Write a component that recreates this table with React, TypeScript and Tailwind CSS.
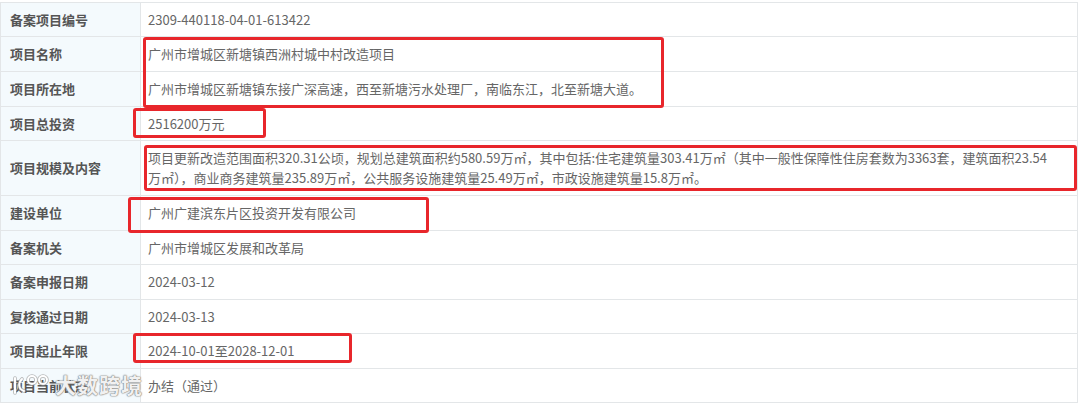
import React from 'react';

interface Row {
  label: string;
  value: React.ReactNode;
  h: string;
}

const rows: Row[] = [
  { label: '备案项目编号', value: '2309-440118-04-01-613422', h: 'h-[34px]' },
  { label: '项目名称', value: '广州市增城区新塘镇西洲村城中村改造项目', h: 'h-[35px]' },
  { label: '项目所在地', value: '广州市增城区新塘镇东接广深高速，西至新塘污水处理厂，南临东江，北至新塘大道。', h: 'h-[35px]' },
  { label: '项目总投资', value: '2516200万元', h: 'h-[34px]' },
  {
    label: '项目规模及内容',
    value: (
      <>
        项目更新改造范围面积320.31公顷，规划总建筑面积约580.59万㎡，其中包括:住宅建筑量303.41万㎡（其中一般性保障性住房套数为3363套，建筑面积23.54
        <br />
        万㎡），商业商务建筑量235.89万㎡，公共服务设施建筑量25.49万㎡，市政设施建筑量15.8万㎡。
      </>
    ),
    h: 'h-[55px]',
  },
  { label: '建设单位', value: '广州广建滨东片区投资开发有限公司', h: 'h-[35px]' },
  { label: '备案机关', value: '广州市增城区发展和改革局', h: 'h-[34px]' },
  { label: '备案申报日期', value: '2024-03-12', h: 'h-[35px]' },
  { label: '复核通过日期', value: '2024-03-13', h: 'h-[34px]' },
  { label: '项目起止年限', value: '2024-10-01至2028-12-01', h: 'h-[35px]' },
  { label: '项目当前状态', value: '办结（通过）', h: 'h-[34px]' },
];

const Highlight: React.FC<{ className: string }> = ({ className }) => (
  <div className={`absolute border-[3px] border-[#e8262b] rounded-[3px] pointer-events-none ${className}`} />
);

export default function App() {
  return (
    <div
      className="relative w-[1080px] h-[403px] bg-white overflow-hidden pt-[2px]"
      style={{ fontFamily: '"Noto Sans CJK SC", "Microsoft YaHei", sans-serif' }}
    >
      <div className="w-[1078px] border-l border-r border-t border-[#e3e6e8]">
        {rows.map((r) => (
          <div key={r.label} className={`flex border-b border-[#e3e6e8] ${r.h}`}>
            <div className="w-[140px] shrink-0 bg-[#f4fafd] border-r border-[#e3e6e8] flex items-center pl-[9px] text-[13px] font-bold text-[#555]">
              {r.label}
            </div>
            <div className="flex-1 flex items-center pl-[7px] text-[13px] leading-[20px] text-[#666] whitespace-nowrap">
              <div>{r.value}</div>
            </div>
          </div>
        ))}
      </div>

      <Highlight className="left-[143px] top-[37px] w-[521px] h-[71px]" />
      <Highlight className="left-[133px] top-[108px] w-[133px] h-[30px]" />
      <Highlight className="left-[144px] top-[145px] w-[933px] h-[46px]" />
      <Highlight className="left-[128px] top-[197px] w-[301px] h-[36px]" />
      <Highlight className="left-[133px] top-[333px] w-[219px] h-[30px]" />

      {/* watermark */}
      <div className="absolute left-[10px] top-[369px] flex items-center gap-[3px] pointer-events-none">
        <svg width="42" height="30" viewBox="0 0 42 30" fill="none" strokeLinecap="round">
          <g stroke="#9a9a9a" strokeWidth="3.6" opacity="0.7">
            <path d="M5 9 V24 M12 10 c-4 4 -4 10 2 12" />
            <circle cx="22" cy="11" r="4" />
            <circle cx="33" cy="11" r="4" />
          </g>
          <g stroke="#ffffff" strokeWidth="2">
            <path d="M5 9 V24 M12 10 c-4 4 -4 10 2 12" />
            <circle cx="22" cy="11" r="4" />
            <circle cx="33" cy="11" r="4" />
          </g>
        </svg>
        <span
          className="text-[21px] font-bold tracking-[1px] text-white/90 leading-none"
          style={{ textShadow: '0 0 1px #777, 0 0 1px #777, 0 0 2px #999' }}
        >
          大数跨境
        </span>
      </div>
    </div>
  );
}
